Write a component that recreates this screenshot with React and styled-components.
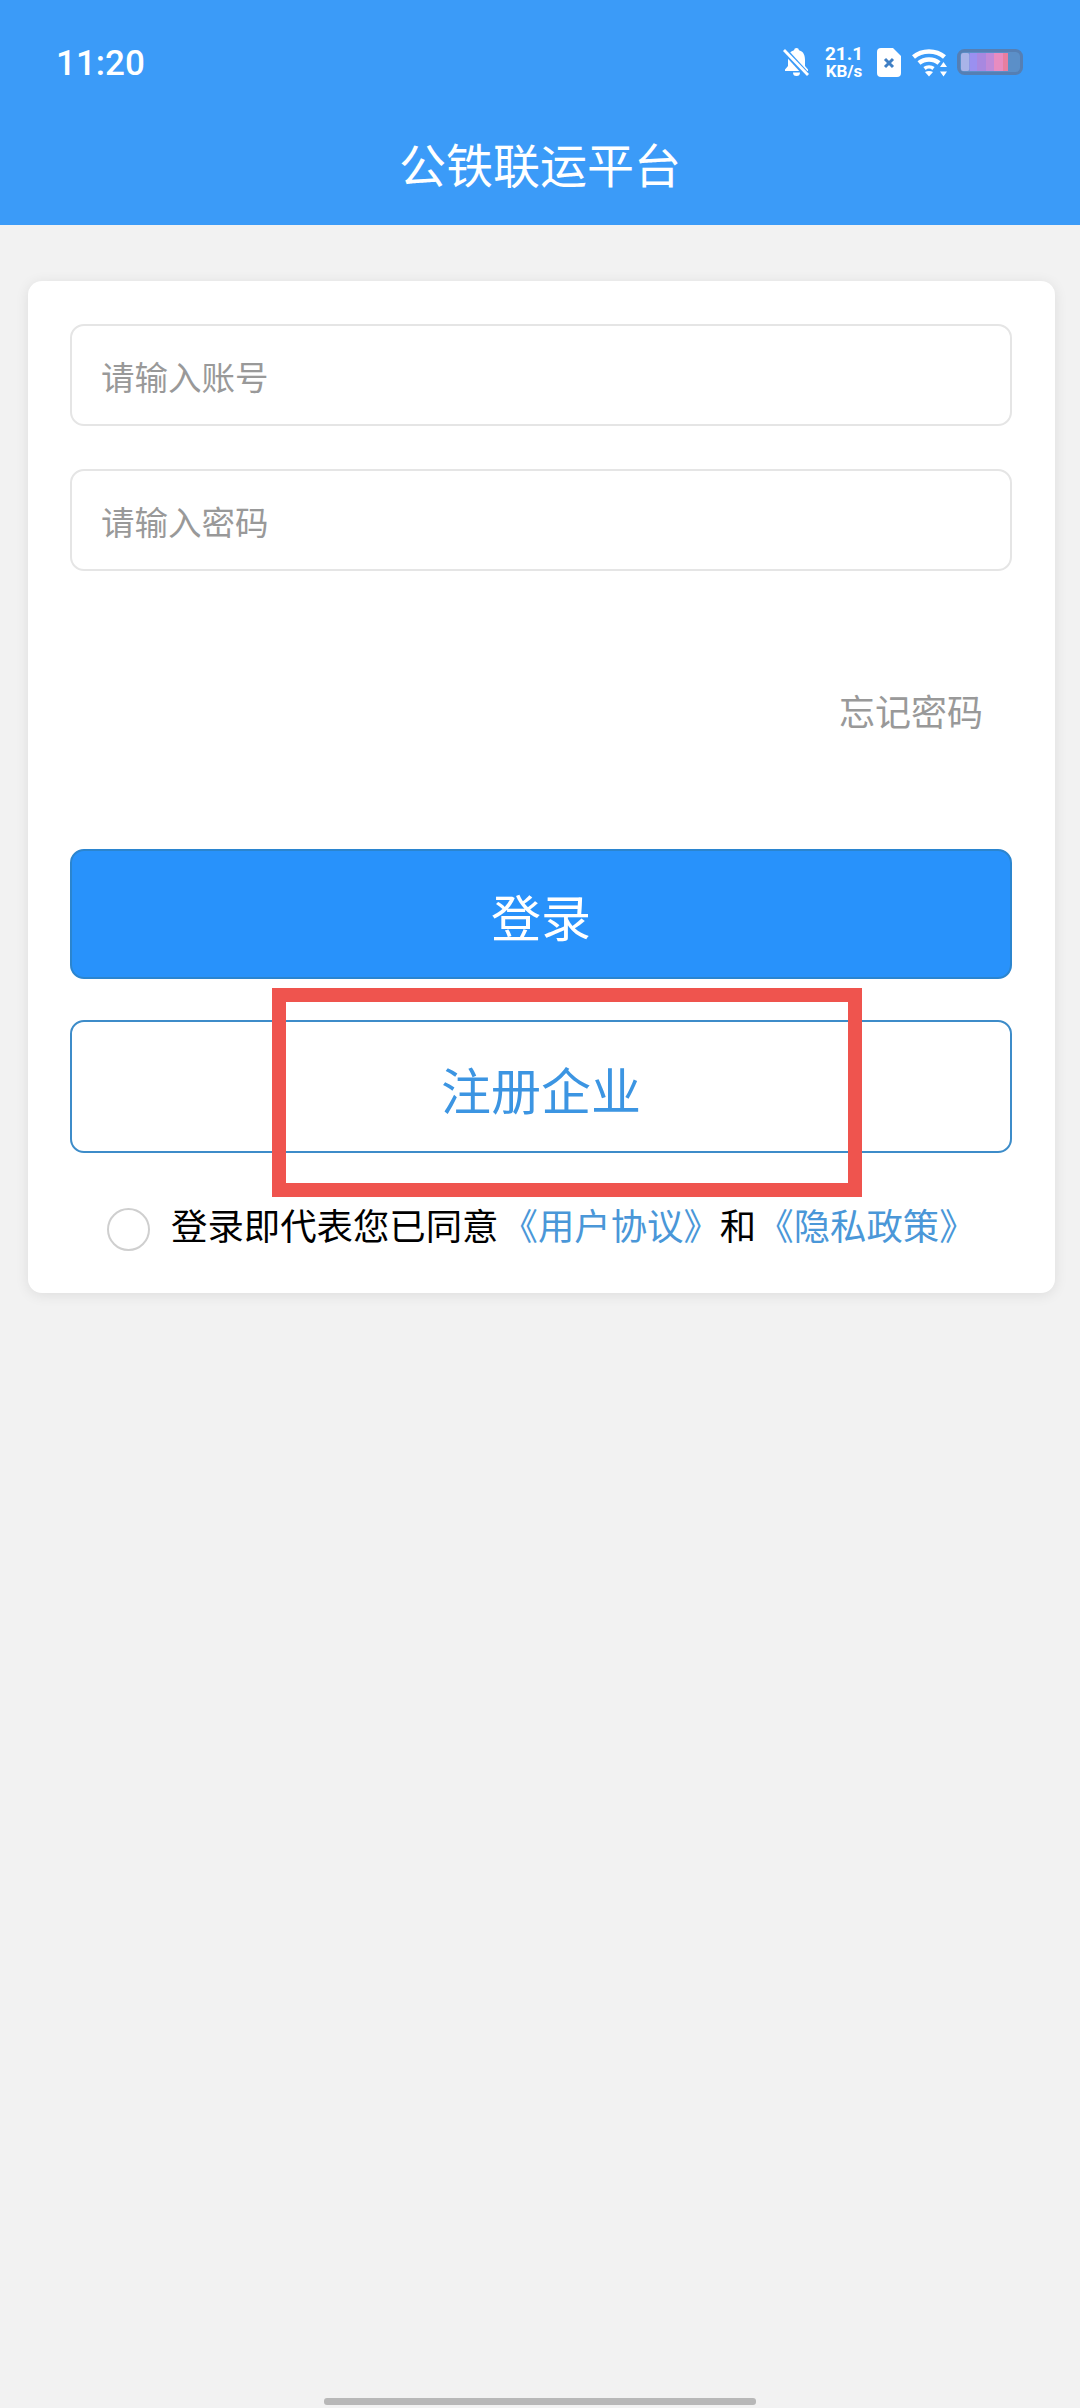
import styled, { createGlobalStyle } from 'styled-components';

const GlobalStyle = createGlobalStyle`
  html, body {
    margin: 0;
    padding: 0;
    background: #f2f2f2;
    font-family: "Noto Sans CJK SC", "Noto Sans", sans-serif;
  }
  * { box-sizing: border-box; }
`;

const Page = styled.div`
  width: 1080px;
  height: 2408px;
  display: flex;
  flex-direction: column;
  background: #f2f2f2;
  overflow: hidden;
`;

const Header = styled.header`
  height: 225px;
  flex-shrink: 0;
  background: #3b9bf8;
  color: #fff;
  display: flex;
  flex-direction: column;
`;

const StatusBar = styled.div`
  height: 124px;
  padding: 0 57px 0 56px;
  display: flex;
  align-items: center;
  justify-content: space-between;
`;

const Time = styled.span`
  padding-top: 2px;
  font-family: Roboto, sans-serif;
  font-size: 35px;
  font-weight: 500;
  line-height: 1;
`;

const StatusIcons = styled.div`
  display: flex;
  align-items: center;
`;

const Speed = styled.div`
  width: 40px;
  margin: 0 13px 0 14px;
  display: flex;
  flex-direction: column;
  align-items: center;
  font-family: Roboto, sans-serif;
  font-weight: 700;
  white-space: nowrap;
  span:first-child { font-size: 19px; line-height: 19px; }
  span:last-child { font-size: 17px; line-height: 17px; }
`;

const Title = styled.h1`
  margin: 6px 0 0;
  font-size: 47px;
  font-weight: 400;
  line-height: 66px;
  text-align: center;
`;

const Card = styled.main`
  margin: 56px 25px 0 28px;
  height: 1012px;
  padding: 43px 43px 0 42px;
  background: #fff;
  border-radius: 14px;
  box-shadow: 0 2px 14px rgba(0, 0, 0, 0.09);
  display: flex;
  flex-direction: column;
`;

const Field = styled.div`
  height: 102px;
  margin-bottom: 43px;
  padding-left: 29px;
  display: flex;
  align-items: center;
  border: 2px solid #e5e5e5;
  border-radius: 14px;
  color: #999;
  font-size: 33.5px;
`;

const ForgotRow = styled.div`
  margin-top: 71px;
  height: 50px;
  padding-right: 29px;
  text-align: right;
  color: #999;
  font-size: 36px;
  line-height: 50px;
`;

const Button = styled.div`
  height: ${(p) => p.$height}px;
  padding-top: 2px;
  display: flex;
  align-items: center;
  justify-content: center;
  border: 2px solid ${(p) => (p.$primary ? '#2b85cf' : '#3d8cc9')};
  border-radius: 14px;
  background: ${(p) => (p.$primary ? '#2892fb' : '#fff')};
  color: ${(p) => (p.$primary ? '#fff' : '#3c95e2')};
  font-size: 50px;
  position: relative;
`;

const LoginButton = styled(Button)`
  margin-top: 114px;
`;

const RegisterButton = styled(Button)`
  margin-top: 41px;
`;

// red annotation box drawn over the screenshot
const Highlight = styled.div`
  position: absolute;
  left: 200px;
  top: -34px;
  width: 590px;
  height: 209px;
  border: 14px solid #ef544e;
  pointer-events: none;
`;

const Agreement = styled.div`
  margin-top: 44px;
  padding-left: 37px;
  display: flex;
  align-items: center;
  font-size: 36.4px;
  line-height: 54px;
  color: #000;
  white-space: nowrap;
  text-spacing-trim: space-all;
`;

const Radio = styled.span`
  width: 43px;
  height: 43px;
  margin: 10px 21px 0 0;
  flex-shrink: 0;
  border: 2px solid #cfcfcf;
  border-radius: 50%;
`;

const Link = styled.span`
  margin-left: ${(p) => p.$gap}px;
  color: #4a97d8;
`;

const HomeBar = styled.div`
  width: 432px;
  height: 7px;
  margin: auto auto 3px;
  border-radius: 3px;
  background: #b8b8b8;
`;

const WifiIcon = styled.svg`
  margin-left: 11px;
`;

const BatteryIcon = styled.svg`
  margin-left: 9px;
`;

const BellOff = () => (
  <svg width="27" height="30" viewBox="0 0 27 30">
    <path
      fill="#fff"
      d="M13.5 1a2.500 2.500 0 0 1 2.500 2.200C21 4.500 22 9 22 13v6l3 3.500V24H2v-1.500L5 19v-6c0-4 1-8.500 6-9.800A2.500 2.500 0 0 1 13.500 1zM10 25.500h7a3.500 3.500 0 0 1-7 0z"
    />
    <path d="M2 4l22 24" stroke="#3b9bf8" strokeWidth="6" fill="none" />
    <path d="M1 3l24 25" stroke="#fff" strokeWidth="2.800" fill="none" />
  </svg>
);

const SimX = () => (
  <svg width="24" height="29" viewBox="0 0 24 29">
    <path d="M4 0h12l8 8v17a4 4 0 0 1-4 4H4a4 4 0 0 1-4-4V4a4 4 0 0 1 4-4z" fill="#fff" />
    <path d="M8 11l8 8M16 11l-8 8" stroke="#3f7fc4" strokeWidth="3" fill="none" />
  </svg>
);

const Wifi = () => (
  <WifiIcon width="36" height="29" viewBox="0 0 36 29" fill="none">
    <path d="M1.500 9C10 1.500 24 1.500 32.500 9" stroke="#fff" strokeWidth="4.500" />
    <path d="M7 15c5.500-4.800 14.500-4.800 20 0" stroke="#fff" strokeWidth="4.500" />
    <path d="M12.500 20.500c2.500-2 6.500-2 9 0" stroke="#fff" strokeWidth="3.600" />
    <path d="M17 28.500l-4-4.500c2.500-1.500 5.500-1.500 8 0z" fill="#fff" />
    <path d="M31.500 14l3.500 5h-7zM31.500 28.500l-3.500-5h7z" fill="#fff" />
  </WifiIcon>
);

const Battery = () => (
  <BatteryIcon width="66" height="26" viewBox="0 0 66 26">
    <rect x="1.500" y="1.500" width="63" height="23" rx="6" fill="#5b8fc8" stroke="#557fb4" strokeWidth="3" />
    <rect x="4" y="4" width="8.500" height="18" rx="2" fill="#a9b4e8" />
    <rect x="12.500" y="4" width="7.500" height="18" fill="#9a90f0" />
    <rect x="20" y="4" width="9" height="18" fill="#a888e0" />
    <rect x="29" y="4" width="8" height="18" fill="#c08ad8" />
    <rect x="37" y="4" width="9" height="18" fill="#e88cc0" />
    <rect x="46" y="4" width="5" height="18" fill="#e87fa0" />
  </BatteryIcon>
);

export default function App() {
  return (
    <Page>
      <GlobalStyle />
      <Header>
        <StatusBar>
          <Time>11:20</Time>
          <StatusIcons>
            <BellOff />
            <Speed>
              <span>21.1</span>
              <span>KB/s</span>
            </Speed>
            <SimX />
            <Wifi />
            <Battery />
          </StatusIcons>
        </StatusBar>
        <Title>公铁联运平台</Title>
      </Header>
      <Card>
        <Field>请输入账号</Field>
        <Field>请输入密码</Field>
        <ForgotRow>忘记密码</ForgotRow>
        <LoginButton $primary $height={130}>登录</LoginButton>
        <RegisterButton $height={133}>
          注册企业
          <Highlight />
        </RegisterButton>
        <Agreement>
          <Radio />
          登录即代表您已同意<Link $gap={3}>《用户协议》</Link>和<Link $gap={1}>《隐私政策》</Link>
        </Agreement>
      </Card>
      <HomeBar />
    </Page>
  );
}
